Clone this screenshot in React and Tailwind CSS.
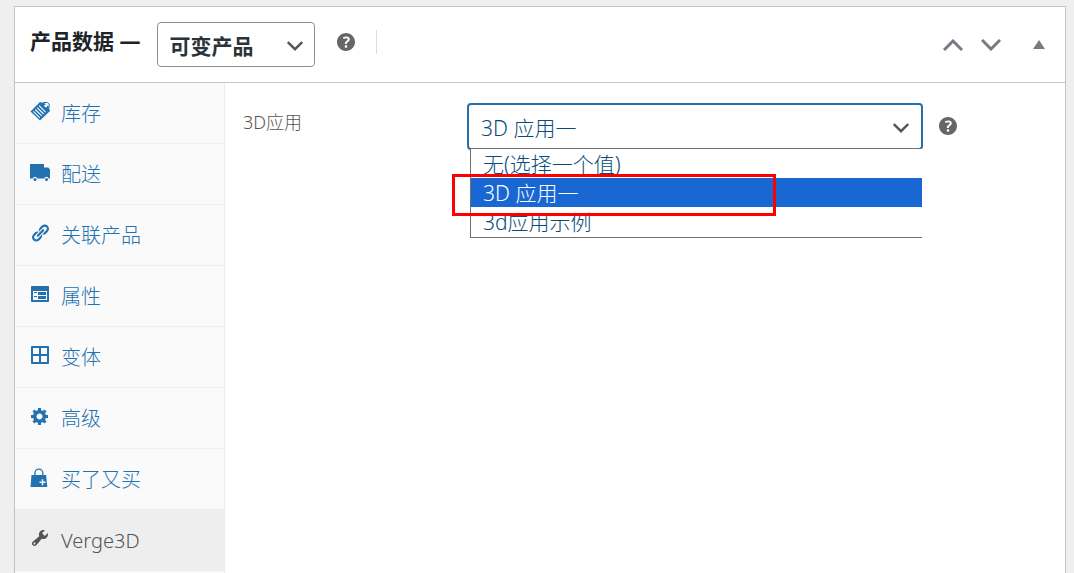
import React, { useState } from 'react'

const tabs = [
	{ id: 'inventory', label: '库存' },
	{ id: 'shipping', label: '配送' },
	{ id: 'linked', label: '关联产品' },
	{ id: 'attributes', label: '属性' },
	{ id: 'variations', label: '变体' },
	{ id: 'advanced', label: '高级' },
	{ id: 'bought', label: '买了又买' },
	{ id: 'verge3d', label: 'Verge3D' }
]

const apps = ['无(选择一个值)', '3D 应用一', '3d应用示例']

const shapes = {
	inventory: (
		<>
			<path d="M.5 10.500 10 1l5 1.500 3.500 3L20 10l-10 9.500z" />
			<path d="M13 1.500h4.500l1.700 1.500v3.500L17.500 8" fill="none" stroke="currentColor" strokeWidth="1" />
			<path d="m3.400 10.400 6.400 6.400M5.300 8.500l6.400 6.400M7.200 6.600l6.400 6.400M9.100 4.700l6.400 6.400" fill="none" stroke="#fafafa" strokeWidth="1.100" />
			<circle cx="15.800" cy="4.800" r="1.500" fill="#fafafa" />
		</>
	),
	shipping: (
		<>
			<path d="M0 2h14v3.500h4.300L20 7.500v9h-1.200a2.400 2.400 0 0 0-4.600 0H7.300a2.400 2.400 0 0 0-4.600 0H0z" />
			<circle cx="5" cy="17.500" r="1.500" />
			<circle cx="16.500" cy="17.500" r="1.500" />
		</>
	),
	linked: (
		<path d="M17.740 2.760c1.680 1.690 1.680 4.410 0 6.100l-1.530 1.520c-1.120 1.120-2.700 1.470-4.140 1.090l2.620-2.610.760-.770.760-.760c.840-.840.840-2.200 0-3.040-.840-.850-2.200-.850-3.040 0l-.770.760-3.380 3.380c-.370-1.440-.020-3.020 1.100-4.140l1.520-1.530c1.690-1.680 4.420-1.680 6.100 0zM8.590 13.430l5.340-5.340c.420-.420.420-1.100 0-1.520-.440-.430-1.130-.390-1.530 0l-5.330 5.340c-.420.420-.420 1.100 0 1.520.440.430 1.130.390 1.520 0zm-.760 2.290l4.140-4.150c.380 1.440.030 3.020-1.090 4.140l-1.520 1.530c-1.690 1.680-4.410 1.680-6.100 0-1.680-1.680-1.680-4.420 0-6.100l1.530-1.520c1.120-1.120 2.700-1.470 4.140-1.100l-4.140 4.150c-.850.840-.850 2.200 0 3.050.840.840 2.200.840 3.040 0z" />
	),
	attributes: (
		<path fillRule="evenodd" d="M2 2h16c.55 0 1 .45 1 1v14c0 .55-.45 1-1 1H2c-.55 0-1-.45-1-1V3c0-.55.45-1 1-1zm15 14V7H3v9h14zM4 8v1h3V8H4zm4 0v3h8V8H8zm-4 4v1h3v-1H4zm4 0v3h8v-3H8z" />
	),
	variations: (
		<path fillRule="evenodd" d="M2 1h16a1 1 0 0 1 1 1v16a1 1 0 0 1-1 1H2a1 1 0 0 1-1-1V2a1 1 0 0 1 1-1zm1 2v6h6V3zm8 0v6h6V3zm-8 8v6h6v-6zm8 0v6h6v-6z" />
	),
	advanced: (
		<path d="M18 12h-2.180c-.170.700-.440 1.350-.810 1.930l1.540 1.540-2.100 2.100-1.540-1.540c-.580.360-1.230.630-1.910.790V19H8v-2.180c-.680-.160-1.330-.430-1.910-.790l-1.540 1.540-2.120-2.120 1.540-1.540c-.360-.580-.630-1.230-.790-1.910H1V9.030h2.170c.160-.700.440-1.350.800-1.940L2.430 5.550l2.100-2.100 1.540 1.540c.580-.370 1.240-.640 1.930-.810V2h3v2.180c.680.160 1.330.430 1.910.790l1.540-1.540 2.120 2.120-1.540 1.540c.360.590.640 1.240.800 1.940H18V12zm-8.500 1.500c1.660 0 3-1.340 3-3s-1.340-3-3-3-3 1.340-3 3 1.340 3 3 3z" />
	),
	bought: (
		<>
			<path d="M5 9V6a3.900 3.900 0 0 1 7.800 0v3" fill="none" stroke="currentColor" strokeWidth="1.300" />
			<path d="M1.500 8h14.600l1.200 12H.5z" />
			<path d="M12.500 12.300v6M9.500 15.300h6" stroke="#fafafa" strokeWidth="1.500" />
		</>
	),
	verge3d: (
		<path d="M16.680 9.770c-1.340 1.340-3.300 1.670-4.950.990l-5.410 6.520c-.990.990-2.590.990-3.580 0s-.990-2.590 0-3.570l6.520-5.420c-.680-1.650-.350-3.610.990-4.950 1.280-1.280 3.120-1.620 4.720-1.060l-2.890 2.890 2.820 2.820 2.860-2.870c.530 1.580.180 3.390-1.080 4.650zM3.810 16.210c.400.390 1.040.390 1.430 0 .400-.400.400-1.040 0-1.430-.390-.400-1.030-.400-1.430 0-.390.390-.390 1.030 0 1.430z" />
	)
}

const Chevron = ({ up, className }) => (
	<svg viewBox="0 0 20 12" className={className} fill="none" stroke="currentColor" strokeWidth="3" aria-hidden="true">
		<path d={up ? 'm1 11 9-9 9 9' : 'm1 1 9 9 9-9'} />
	</svg>
)

const HelpTip = () => (
	<button type="button" aria-label="帮助" className="text-[#666666]">
		<svg viewBox="3 3 14 14" className="w-[18px] h-[18px]" fill="currentColor" aria-hidden="true">
			<path d="M17 10c0-3.870-3.140-7-7-7-3.870 0-7 3.130-7 7s3.130 7 7 7c3.860 0 7-3.130 7-7zm-6.300 1.480H9.140v-.430c0-.380.080-.700.240-.980s.460-.570.880-.890c.410-.290.680-.530.810-.710.140-.180.200-.390.200-.620 0-.250-.090-.440-.280-.580-.190-.130-.450-.190-.790-.190-.580 0-1.250.190-2 .570l-.640-1.280c.870-.490 1.800-.740 2.770-.740.810 0 1.450.200 1.920.580.480.390.710.910.710 1.550 0 .430-.090.800-.290 1.110-.190.320-.570.670-1.110 1.060-.380.280-.610.490-.710.630-.100.150-.150.340-.150.570v.350zm-1.470 2.740c-.180-.170-.270-.420-.270-.730 0-.330.080-.580.260-.750s.430-.250.770-.250c.320 0 .570.090.750.260s.270.420.270.740c0 .300-.090.550-.270.720-.180.180-.430.270-.750.270-.330 0-.580-.090-.760-.260z" />
		</svg>
	</button>
)

const App = () => {
	const [active, setActive] = useState('verge3d')
	const [type, setType] = useState('可变产品')
	const [app, setApp] = useState(apps[1])

	return (
		<div className="min-h-screen flex flex-col overflow-hidden bg-[#efefef] pt-[6px] pl-[14px] pr-2 font-['Noto_Sans','Noto_Sans_CJK_SC',sans-serif]">
			<div className="flex-1 flex flex-col bg-white border border-b-0 border-[#c3c4c7]">
				{/* Header */}
				<div className="flex justify-between border-b border-[#c3c4c7] py-[15px] pl-[15px] pr-5">
					<div className="flex h-[45px]">
						<label htmlFor="product-type" className="text-[21px] leading-[38px] font-bold text-[#1d2327]">
							产品数据 —
						</label>
						<div className="relative ml-[17px]">
							<select
								id="product-type"
								value={type}
								onChange={(e) => setType(e.target.value)}
								className="appearance-none w-[158px] h-[45px] pt-[2px] pl-[11px] pr-10 border border-[#8c8f94] rounded bg-white text-[21px] leading-8 font-bold text-[#2c3338]"
							>
								<option>可变产品</option>
								<option>简单产品</option>
							</select>
							<Chevron className="absolute right-3 top-[19px] w-4 h-[10px] text-[#555555] pointer-events-none" />
						</div>
						<div className="flex items-center h-10 ml-[22px] gap-[21px]">
							<HelpTip />
							<span className="w-px h-6 bg-[#dcdcde]" />
						</div>
					</div>
					<div className="flex items-center h-[45px] text-[#787c82]">
						<button type="button" aria-label="上移">
							<Chevron up className="w-5 h-3" />
						</button>
						<button type="button" aria-label="下移" className="ml-[18px]">
							<Chevron className="w-5 h-3" />
						</button>
						<button type="button" aria-label="切换面板" className="ml-8">
							<svg viewBox="0 0 12 10" className="w-3 h-[10px]" fill="currentColor" aria-hidden="true">
								<path d="M6 0l6 9H0z" />
							</svg>
						</button>
					</div>
				</div>

				<div className="flex-1 flex">
					{/* Tabs */}
					<nav className="w-[210px] shrink-0 bg-[#fafafa] border-r border-[#eeeeee]">
						<ul>
							{tabs.map((tab) => (
								<li key={tab.id}>
									<a
										href={`#${tab.id}`}
										onClick={() => setActive(tab.id)}
										className={`flex items-center h-[61px] pt-[2px] pl-[15px] gap-[11px] border-b border-[#eeeeee] text-[20px] font-light ${
											tab.id === active ? 'bg-[#eeeeee] text-[#555555]' : 'text-[#2271b1]'
										}`}
									>
										<svg viewBox="0 0 20 20" className="w-5 h-5 mb-[6px] shrink-0" fill="currentColor" aria-hidden="true">
											{shapes[tab.id]}
										</svg>
										{tab.label}
									</a>
								</li>
							))}
						</ul>
					</nav>

					{/* Verge3D panel */}
					<div className="flex-1 flex items-start pt-5 pl-[18px]">
						<label htmlFor="verge3d-app" className="w-56 shrink-0 text-[18px] leading-[38px] font-light text-[#555555]">
							3D应用
						</label>
						<div className="relative w-[456px] text-[21px] font-light">
							<select
								id="verge3d-app"
								value={app}
								onChange={(e) => setApp(e.target.value)}
								className="appearance-none w-full h-[47px] pt-1 pl-3 pr-10 border-2 border-[#2271b1] rounded bg-white text-[#0a4b78] outline-none"
							>
								{apps.map((name) => (
									<option key={name}>{name}</option>
								))}
							</select>
							<Chevron className="absolute right-[14px] top-5 w-4 h-[10px] text-[#555555] pointer-events-none" />

							{/* Open list */}
							<ul role="listbox" aria-label="3D应用" className="absolute left-[3px] right-px top-[45px] pb-px bg-white border border-r-0 border-[#707070] text-[#0a4b78]">
								{apps.map((name) => (
									<li
										key={name}
										role="option"
										aria-selected={name === app}
										onClick={() => setApp(name)}
										className={`h-[29px] leading-[31px] pl-3 ${name === app ? 'bg-[#1967d2] text-white' : ''}`}
									>
										{name}
									</li>
								))}
							</ul>

							{/* Highlight frame */}
							<div className="absolute -left-[15px] top-[71px] w-[324px] h-[42px] border-3 border-[#ff0000] pointer-events-none" />
						</div>
						<div className="flex items-center h-[46px] ml-4">
							<HelpTip />
						</div>
					</div>
				</div>
			</div>
		</div>
	)
}

export default App
